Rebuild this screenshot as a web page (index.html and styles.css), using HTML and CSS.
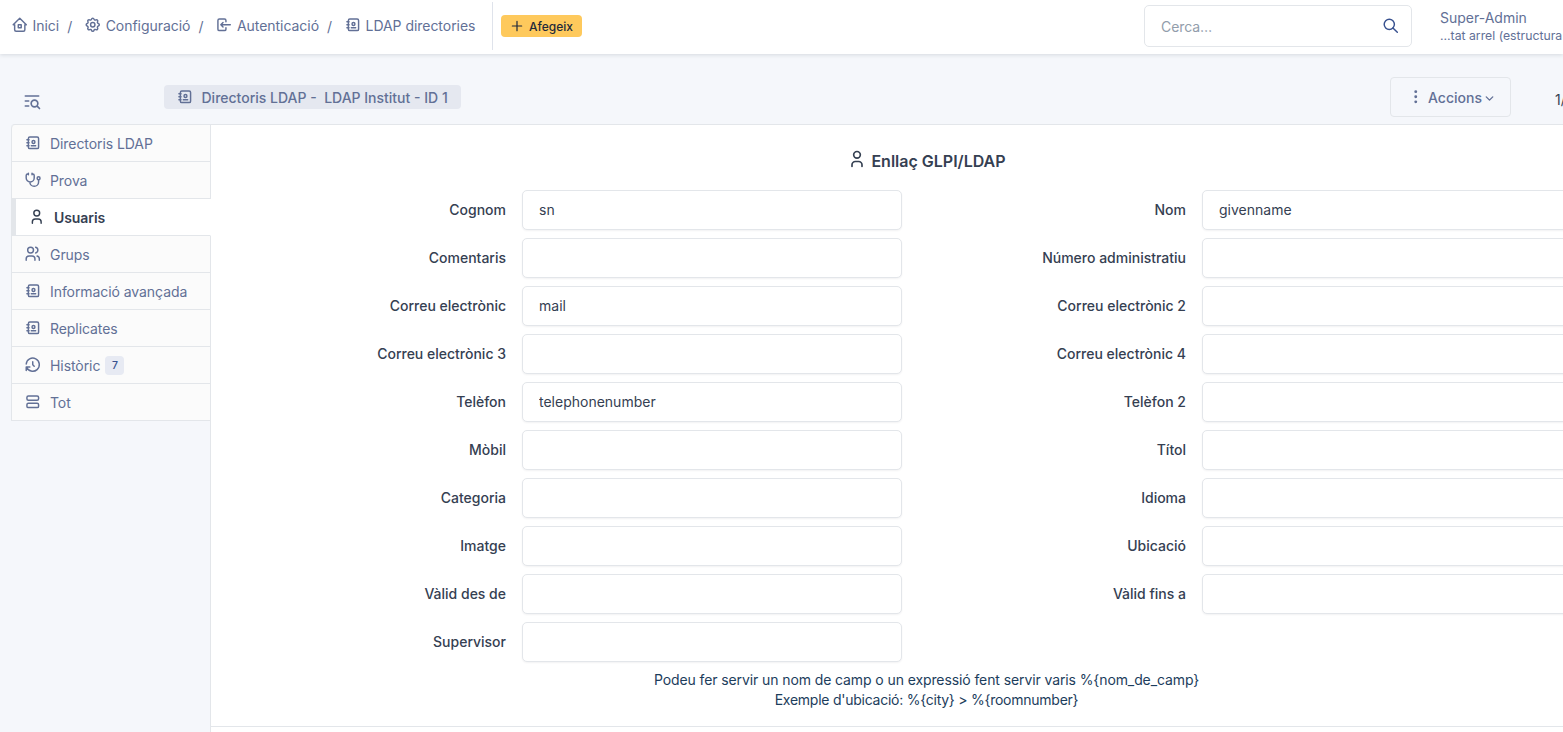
FILE: index.html
```html
<!DOCTYPE html>
<html lang="ca">
<head>
    <meta charset="UTF-8">
    <meta name="viewport" content="width=device-width, initial-scale=1.0">
    <title>Directoris LDAP - LDAP Institut</title>
    <link rel="stylesheet" href="styles.css">
</head>
<body>
    <svg class="sprite">
        <symbol id="home" viewBox="0 0 24 24"><path d="M5 12H3l9-9 9 9h-2M5 12v7a2 2 0 0 0 2 2h10a2 2 0 0 0 2-2v-7M10 12h4v4h-4z"/></symbol>
        <symbol id="settings" viewBox="0 0 24 24"><path d="M10.325 4.317c.426-1.756 2.924-1.756 3.35 0a1.724 1.724 0 0 0 2.573 1.066c1.543-.94 3.31.826 2.37 2.37a1.724 1.724 0 0 0 1.065 2.572c1.756.426 1.756 2.924 0 3.35a1.724 1.724 0 0 0-1.066 2.573c.94 1.543-.826 3.31-2.37 2.37a1.724 1.724 0 0 0-2.572 1.065c-.426 1.756-2.924 1.756-3.35 0a1.724 1.724 0 0 0-2.573-1.066c-1.543.94-3.31-.826-2.37-2.37a1.724 1.724 0 0 0-1.065-2.572c-1.756-.426-1.756-2.924 0-3.35a1.724 1.724 0 0 0 1.066-2.573c-.94-1.543.826-3.31 2.37-2.37 1 .608 2.296.07 2.572-1.065z"/><circle cx="12" cy="12" r="3"/></symbol>
        <symbol id="login" viewBox="0 0 24 24"><path d="M15 8V6a2 2 0 0 0-2-2H6a2 2 0 0 0-2 2v12a2 2 0 0 0 2 2h7a2 2 0 0 0 2-2v-2M21 12H8l3-3M11 15l-3-3"/></symbol>
        <symbol id="address-book" viewBox="0 0 24 24"><path d="M20 6v12a2 2 0 0 1-2 2H8a2 2 0 0 1-2-2V6a2 2 0 0 1 2-2h10a2 2 0 0 1 2 2zM10 16h6M4 8h3M4 12h3M4 16h3"/><circle cx="13" cy="11" r="2"/></symbol>
        <symbol id="plus" viewBox="0 0 24 24"><path d="M12 5v14M5 12h14"/></symbol>
        <symbol id="search" viewBox="0 0 24 24"><circle cx="10" cy="10" r="7"/><path d="M21 21l-6-6"/></symbol>
        <symbol id="list-search" viewBox="0 0 24 24"><circle cx="15" cy="15" r="4"/><path d="M18.500 18.500l2.500 2.500M4 6h16M4 12h4M4 18h4"/></symbol>
        <symbol id="dots" viewBox="0 0 24 24"><circle cx="12" cy="5" r="1"/><circle cx="12" cy="12" r="1"/><circle cx="12" cy="19" r="1"/></symbol>
        <symbol id="chevron" viewBox="0 0 24 24"><path d="M6 9l6 6 6-6"/></symbol>
        <symbol id="stethoscope" viewBox="0 0 24 24"><path d="M6 4H5a2 2 0 0 0-2 2v3.500a5.500 5.500 0 0 0 11 0V6a2 2 0 0 0-2-2h-1M8 15a6 6 0 1 0 12 0v-3M11 3v2M6 3v2"/><circle cx="20" cy="10" r="2"/></symbol>
        <symbol id="user" viewBox="0 0 24 24"><circle cx="12" cy="7" r="4"/><path d="M6 21v-2a4 4 0 0 1 4-4h4a4 4 0 0 1 4 4v2"/></symbol>
        <symbol id="users" viewBox="0 0 24 24"><circle cx="9" cy="7" r="4"/><path d="M3 21v-2a4 4 0 0 1 4-4h4a4 4 0 0 1 4 4v2M16 3.130a4 4 0 0 1 0 7.750M21 21v-2a4 4 0 0 0-3-3.850"/></symbol>
        <symbol id="history" viewBox="0 0 24 24"><path d="M12 8v4l2 2M3.050 11a9 9 0 1 1 .5 4m-.5 5v-5h5"/></symbol>
        <symbol id="layout-list" viewBox="0 0 24 24"><rect x="4" y="4" width="16" height="6" rx="2"/><rect x="4" y="14" width="16" height="6" rx="2"/></symbol>
    </svg>

    <header class="topbar">
        <nav class="breadcrumb">
            <a class="crumb"><svg class="icon"><use href="#home"/></svg>Inici</a>
            <span class="slash">/</span>
            <a class="crumb"><svg class="icon"><use href="#settings"/></svg>Configuració</a>
            <span class="slash">/</span>
            <a class="crumb"><svg class="icon"><use href="#login"/></svg>Autenticació</a>
            <span class="slash">/</span>
            <a class="crumb"><svg class="icon"><use href="#address-book"/></svg>LDAP directories</a>
        </nav>
        <div class="toolbar">
            <button class="btn-add"><svg class="icon"><use href="#plus"/></svg>Afegeix</button>
        </div>
        <div class="search">
            <input class="search-input" type="text" placeholder="Cerca…">
            <svg class="icon"><use href="#search"/></svg>
        </div>
        <div class="account">
            <div class="profile">Super-Admin</div>
            <div class="entity">…tat arrel (estructura</div>
        </div>
    </header>

    <div class="heading">
        <svg class="icon toggle"><use href="#list-search"/></svg>
        <div class="title"><svg class="icon"><use href="#address-book"/></svg>Directoris LDAP -&nbsp; LDAP Institut - ID 1</div>
        <button class="btn-actions"><svg class="icon"><use href="#dots"/></svg>Accions<svg class="icon chevron"><use href="#chevron"/></svg></button>
        <span class="pager">1/1</span>
    </div>

    <div class="layout">
        <ul class="tabs">
            <li class="tab"><svg class="icon"><use href="#address-book"/></svg>Directoris LDAP</li>
            <li class="tab"><svg class="icon"><use href="#stethoscope"/></svg>Prova</li>
            <li class="tab active"><svg class="icon"><use href="#user"/></svg>Usuaris</li>
            <li class="tab"><svg class="icon"><use href="#users"/></svg>Grups</li>
            <li class="tab"><svg class="icon"><use href="#address-book"/></svg>Informació avançada</li>
            <li class="tab"><svg class="icon"><use href="#address-book"/></svg>Replicates</li>
            <li class="tab"><svg class="icon"><use href="#history"/></svg>Històric<span class="badge">7</span></li>
            <li class="tab"><svg class="icon"><use href="#layout-list"/></svg>Tot</li>
        </ul>

        <main class="content">
            <form class="card">
                <h3 class="card-title"><svg class="icon"><use href="#user"/></svg>Enllaç GLPI/LDAP</h3>
                <div class="fields">
                    <label for="surname">Cognom</label><input id="surname" type="text" value="sn">
                    <label for="firstname">Nom</label><input id="firstname" type="text" value="givenname">
                    <label for="comment">Comentaris</label><input id="comment" type="text">
                    <label for="number">Número administratiu</label><input id="number" type="text">
                    <label for="email1">Correu electrònic</label><input id="email1" type="text" value="mail">
                    <label for="email2">Correu electrònic 2</label><input id="email2" type="text">
                    <label for="email3">Correu electrònic 3</label><input id="email3" type="text">
                    <label for="email4">Correu electrònic 4</label><input id="email4" type="text">
                    <label for="phone">Telèfon</label><input id="phone" type="text" value="telephonenumber">
                    <label for="phone2">Telèfon 2</label><input id="phone2" type="text">
                    <label for="mobile">Mòbil</label><input id="mobile" type="text">
                    <label for="title">Títol</label><input id="title" type="text">
                    <label for="category">Categoria</label><input id="category" type="text">
                    <label for="language">Idioma</label><input id="language" type="text">
                    <label for="picture">Imatge</label><input id="picture" type="text">
                    <label for="location">Ubicació</label><input id="location" type="text">
                    <label for="begin">Vàlid des de</label><input id="begin" type="text">
                    <label for="end">Vàlid fins a</label><input id="end" type="text">
                    <label for="supervisor">Supervisor</label><input id="supervisor" type="text">
                </div>
                <p class="hint">Podeu fer servir un nom de camp o un expressió fent servir varis %{nom_de_camp}<br><span class="example">Exemple d'ubicació: %{city} &gt; %{roomnumber}</span></p>
            </form>
        </main>
    </div>
</body>
</html>
```

FILE: styles.css
```css
* {
    box-sizing: border-box;
}
body {
    margin: 0;
    height: 732px;
    overflow: hidden;
    background: #f5f7fb;
    color: #354052;
    font-family: Inter, "Liberation Sans", sans-serif;
    font-size: 14px;
    line-height: 20px;
}
input, button {
    font: inherit;
    color: inherit;
}
.sprite {
    display: none;
}
.icon {
    flex: none;
    width: 17.5px;
    height: 17.5px;
    fill: none;
    stroke: currentColor;
    stroke-width: 2;
    stroke-linecap: round;
    stroke-linejoin: round;
}

/* top bar */
.topbar {
    display: flex;
    align-items: flex-start;
    height: 54px;
    background: #fff;
    box-shadow: 0 1px 4px rgba(30, 41, 59, 0.14);
    color: #627096;
    white-space: nowrap;
}
.breadcrumb {
    display: flex;
    flex: none;
    width: 492px;
    padding: 16px 0 0 11px;
    letter-spacing: -0.04px;
}
.crumb {
    display: flex;
    gap: 4px;
}
.slash {
    padding: 1px 12px 0 8px;
}
.toolbar {
    flex: none;
    height: 48px;
    margin-top: 2px;
    padding: 13px 0 0 8px;
    border-left: 1px solid #dfe3eb;
}
.btn-add {
    display: flex;
    align-items: center;
    gap: 4px;
    width: 81px;
    height: 22px;
    padding: 1px 8px 0;
    border: 0;
    border-radius: 4px;
    background: #fec95c;
    color: #1e293b;
    font-size: 12px;
    font-weight: 500;
}
.btn-add .icon {
    width: 16px;
    height: 16px;
    margin-top: -2px;
    stroke-width: 1.8;
}
.search {
    display: flex;
    align-items: center;
    flex: none;
    width: 268px;
    height: 42px;
    margin: 5px 28px 0 562px;
    padding: 0 12px 0 16px;
    border: 1px solid #e3e6ea;
    border-radius: 5px;
    color: #38518f;
}
.search-input {
    flex: 1;
    min-width: 0;
    padding: 2px 0 0;
    border: 0;
    outline: 0;
    background: none;
    letter-spacing: -0.1px;
}
.search-input::placeholder {
    color: #929dab;
}
.account {
    flex: none;
    padding-top: 8px;
}
.entity {
    font-size: 12.25px;
    line-height: 16px;
}

/* item header */
.heading {
    display: flex;
    align-items: flex-start;
    height: 70px;
    padding: 23px 0 0 22px;
    color: #627096;
    font-weight: 500;
    white-space: nowrap;
}
.toggle {
    width: 20px;
    height: 20px;
    margin-top: 14px;
}
.title {
    display: flex;
    align-items: center;
    flex: none;
    gap: 8px;
    width: 297px;
    height: 24px;
    margin: 8px 929px 0 122px;
    padding: 2px 0 0 12px;
    border-radius: 4px;
    background: #e5e8f0;
}
.title .icon {
    margin-top: -2px;
}
.btn-actions {
    display: flex;
    align-items: center;
    flex: none;
    width: 121px;
    height: 40px;
    padding: 2px 0 0 15.5px;
    border: 1px solid #e3e6ea;
    border-radius: 4px;
    background: none;
}
.btn-actions .icon {
    margin: -2px 4px 0 0;
}
.btn-actions .chevron {
    width: 13px;
    height: 13px;
    margin: 0 0 0 1px;
    stroke-width: 2.5;
}
.pager {
    margin: 13px 0 0 44px;
    color: #354052;
    font-weight: 400;
}

/* tabs and form */
.layout {
    display: flex;
    align-items: flex-start;
    padding-left: 11px;
}
.tabs {
    flex: none;
    width: 200px;
    margin: 0 -1px 0 0;
    padding: 0;
    border-top: 1px solid #e3e6ea;
    border-radius: 4px 0 0 0;
    list-style: none;
    z-index: 1;
}
.tab {
    display: flex;
    align-items: center;
    height: 37px;
    padding: 2px 0 0 12px;
    border: 1px solid #e3e6ea;
    border-top: 0;
    background: #fbfbfb;
    color: #627096;
    letter-spacing: -0.07px;
}
.tab:first-child {
    border-top-left-radius: 4px;
}
.tab .icon {
    margin: -2px 8.5px 0 0;
}
.tab.active {
    border-left: 5px solid #e3e6ea;
    border-right-color: #fff;
    background: #fff;
    color: #354052;
    font-weight: 600;
}
.badge {
    width: 19px;
    height: 19px;
    margin: -1px 0 0 5px;
    border-radius: 4px;
    background: #e7eaf3;
    color: #38518f;
    font-size: 10.5px;
    font-weight: 500;
    line-height: 19px;
    text-align: center;
}
.content {
    flex: none;
    width: 1433px;
    height: 608px;
    border: 1px solid #e3e6ea;
    border-bottom: 0;
    background: #fff;
}
.card {
    height: 602px;
    border-bottom: 1px solid #e3e6ea;
}
.card-title {
    display: flex;
    justify-content: center;
    gap: 4px;
    margin: 0;
    padding: 24px 0 17px;
    font-size: 16px;
    font-weight: 600;
    line-height: 24px;
}
.card-title .icon {
    width: 20px;
    height: 20px;
}
.fields {
    display: grid;
    grid-template-columns: 295px 380px 268px 380px;
    column-gap: 16px;
    row-gap: 8px;
    align-items: center;
    margin-bottom: 8px;
}
.fields label {
    font-weight: 500;
    text-align: right;
}
.fields input {
    width: 100%;
    height: 40px;
    padding: 0 16px 2px;
    border: 1px solid #e3e6ea;
    border-radius: 5px;
    background: #fff;
    box-shadow: 0 1px 2px rgba(30, 41, 59, 0.06);
}
.hint {
    margin: 0;
    color: #1c3d5c;
    letter-spacing: -0.1px;
    text-align: center;
}
.example {
    letter-spacing: -0.25px;
}
```
